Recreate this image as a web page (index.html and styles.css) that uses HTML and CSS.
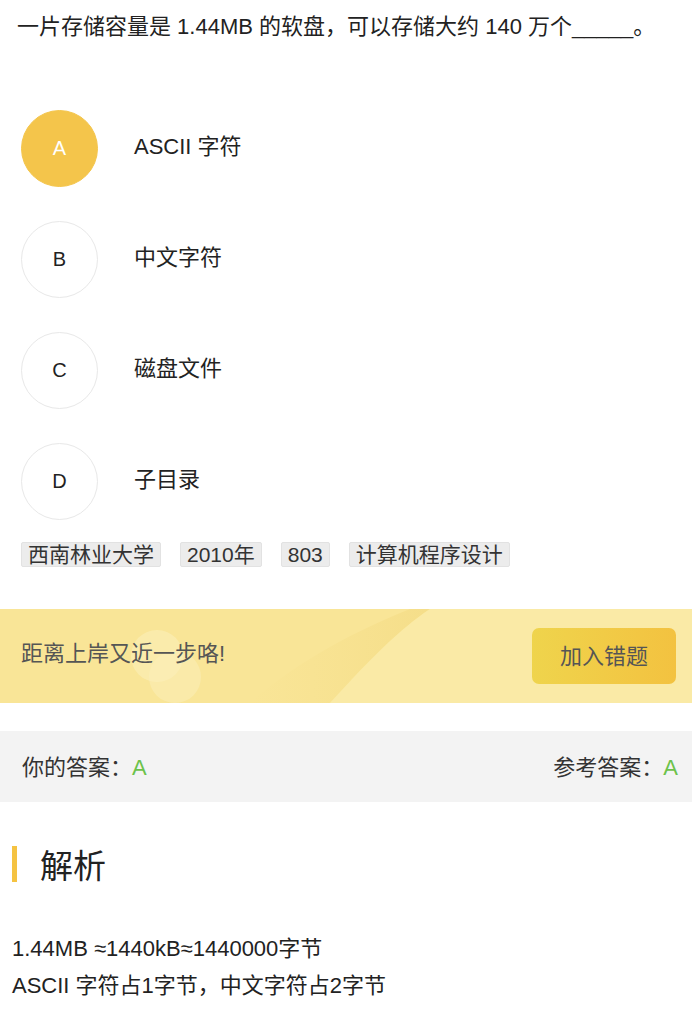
FILE: index.html
```html
<!DOCTYPE html>
<html lang="zh">
<head>
<meta charset="utf-8">
<link rel="stylesheet" href="styles.css">
</head>
<body>
<div class="question">一片存储容量是 1.44MB 的软盘，可以存储大约 140 万个_____。</div>
<div class="options">
  <div class="option"><div class="circle selected">A</div><div class="label">ASCII 字符</div></div>
  <div class="option"><div class="circle">B</div><div class="label">中文字符</div></div>
  <div class="option"><div class="circle">C</div><div class="label">磁盘文件</div></div>
  <div class="option"><div class="circle">D</div><div class="label">子目录</div></div>
</div>
<div class="tags">
  <span class="tag">西南林业大学</span>
  <span class="tag">2010年</span>
  <span class="tag">803</span>
  <span class="tag">计算机程序设计</span>
</div>
<div class="banner">
  <svg class="banner-bg" width="692" height="94" viewBox="0 0 692 94">
    <defs>
      <linearGradient id="sh" x1="0" y1="0" x2="1" y2="0">
        <stop offset="0" stop-color="#f6df8a" stop-opacity="0"/>
        <stop offset="1" stop-color="#f4dc86" stop-opacity="0.8"/>
      </linearGradient>
    </defs>
    <path d="M250 94 C 300 50, 360 20, 410 0 L 430 0 C 400 20, 370 50, 330 94 Z" fill="url(#sh)"/>
    <path d="M330 94 C 370 50, 400 20, 430 0 L 692 0 L 692 94 Z" fill="#faeaa6"/>
    <circle cx="157" cy="47" r="26" fill="#fcf0bc" opacity="0.55"/>
    <circle cx="175" cy="68" r="26" fill="#fcf0bc" opacity="0.5"/>
  </svg>
  <div class="banner-text">距离上岸又近一步咯!</div>
  <div class="btn">加入错题</div>
</div>
<div class="answers">
  <div>你的答案：<span class="green">A</span></div>
  <div>参考答案：<span class="green">A</span></div>
</div>
<div class="section-title"><span class="bar"></span>解析</div>
<div class="analysis">
  <div>1.44MB ≈1440kB≈1440000字节</div>
  <div>ASCII 字符占1字节，中文字符占2字节</div>
</div>
</body>
</html>
```
FILE: styles.css
```css
* { box-sizing: border-box; }
body {
  margin: 0;
  background: #fff;
  color: #222;
  font-family: "Liberation Sans", "Noto Sans CJK SC", Arial, sans-serif;
  font-size: 22px;
  width: 692px;
}
.question {
  padding: 12px 17px 0;
  line-height: 30px;
  color: #222;
}
.options {
  margin-top: 68px;
  padding-left: 21px;
  display: flex;
  flex-direction: column;
  gap: 34px;
}
.option {
  display: flex;
  align-items: center;
  height: 77px;
}
.circle {
  width: 77px;
  height: 77px;
  border-radius: 50%;
  border: 1px solid #e8e8e8;
  display: flex;
  align-items: center;
  justify-content: center;
  color: #222;
  font-size: 20px;
}
.circle.selected {
  background: #f4c54b;
  border-color: #f4c54b;
  color: #fff;
}
.label {
  margin-left: 36px;
  line-height: 30px;
  padding-bottom: 3px;
  color: #222;
}
.tags {
  margin-top: 22px;
  padding-left: 21px;
  display: flex;
  gap: 19px;
}
.tag {
  height: 25px;
  line-height: 23px;
  padding: 0 6px;
  font-size: 21px;
  background: #ececec;
  border: 1px solid #e2e2e2;
  border-radius: 2px;
  color: #333;
}
.banner {
  position: relative;
  margin-top: 42px;
  height: 94px;
  background: #f9e597;
  display: flex;
  align-items: center;
  justify-content: space-between;
  padding: 0 16px 0 21px;
  overflow: hidden;
}
.banner-bg {
  position: absolute;
  left: 0;
  top: 0;
}
.banner-text {
  position: relative;
  color: #555;
  line-height: 30px;
  padding-bottom: 4px;
}
.btn {
  position: relative;
  width: 144px;
  height: 56px;
  border-radius: 7px;
  background: linear-gradient(90deg, #efd44c, #f3c240);
  color: #555;
  display: flex;
  align-items: center;
  justify-content: center;
  padding-bottom: 5px;
}
.answers {
  margin-top: 28px;
  height: 71px;
  background: #f3f3f3;
  display: flex;
  align-items: center;
  justify-content: space-between;
  padding: 0 14px 4px 22px;
  color: #333;
}
.green { color: #6cc24a; }
.section-title {
  margin-top: 44px;
  display: flex;
  align-items: center;
  height: 36px;
  font-size: 33px;
  color: #222;
}
.bar {
  display: inline-block;
  width: 5px;
  height: 36px;
  background: #f5c342;
  margin-left: 12px;
  margin-right: 23px;
}
.analysis {
  margin-top: 48px;
  padding-left: 12px;
  line-height: 37px;
  color: #222;
}
```
